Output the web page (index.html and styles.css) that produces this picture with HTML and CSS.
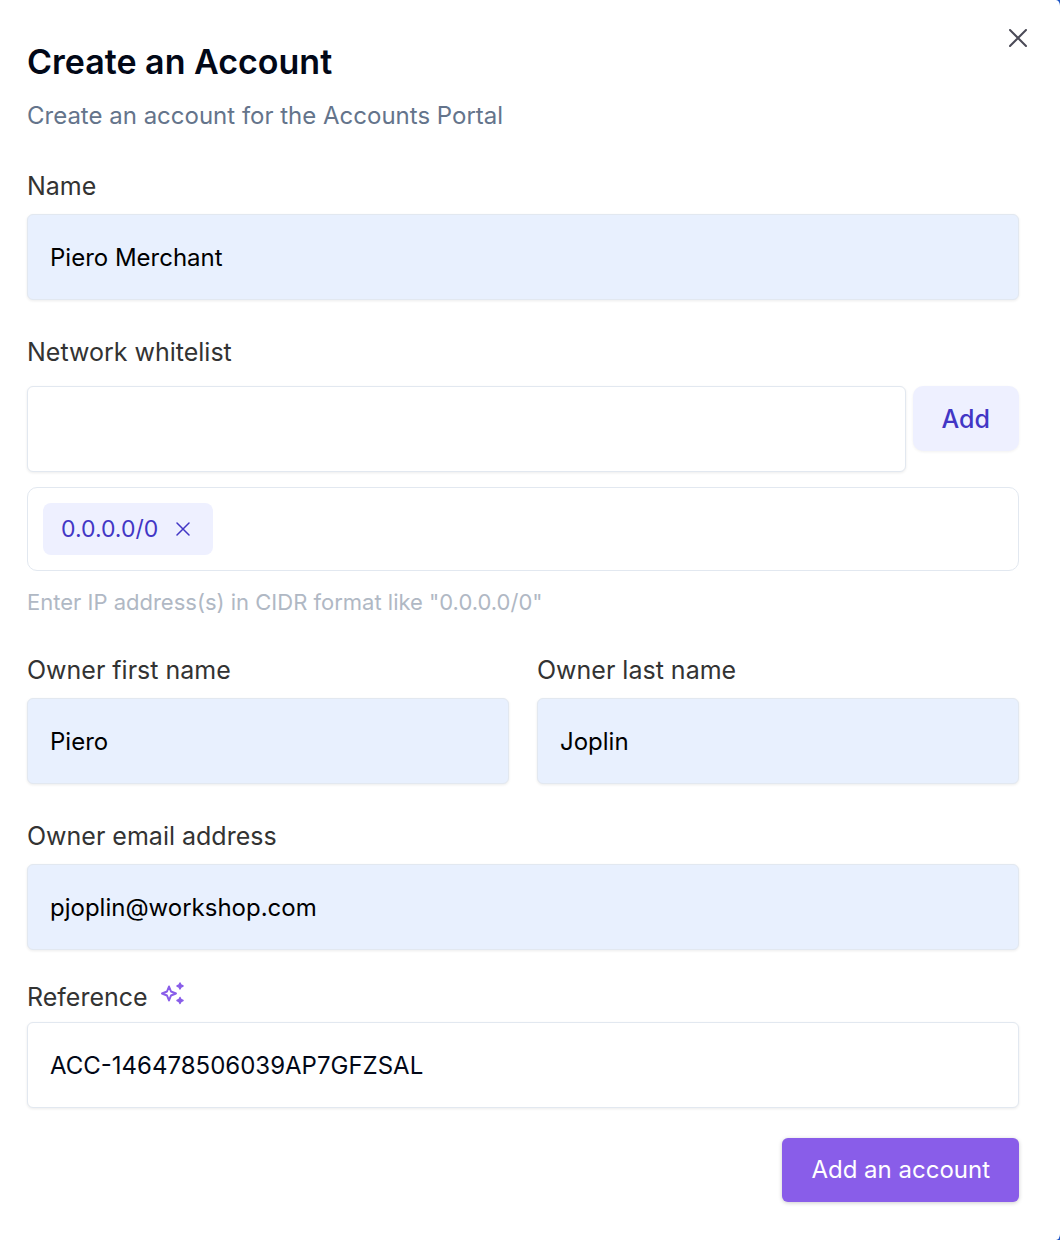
FILE: index.html
```
<!DOCTYPE html>
<html lang="en">

<head>
    <meta charset="utf-8">
    <title>Create an Account</title>
    <meta name="viewport" content="width=device-width">
    <link rel="stylesheet" href="styles.css">
</head>

<body>
    <main class="modal">
        <button type="button" class="close" aria-label="Close">
            <svg width="18" height="18" viewBox="0 0 18 18"><path d="M1 1l16 16M17 1L1 17"/></svg>
        </button>

        <header class="modal-header">
            <h1>Create an Account</h1>
            <p>Create an account for the Accounts Portal</p>
        </header>

        <form>
            <div class="field">
                <label for="name">Name</label>
                <input type="text" id="name" class="filled" value="Piero Merchant">
            </div>

            <div class="field whitelist">
                <label for="network">Network whitelist</label>
                <div class="add-row">
                    <input type="text" id="network">
                    <button type="button" class="btn-add">Add</button>
                </div>
                <div class="tags">
                    <span class="tag">0.0.0.0/0
                        <button type="button" aria-label="Remove 0.0.0.0/0">
                            <svg width="14" height="14" viewBox="0 0 14 14"><path d="M1 1l12 12M13 1L1 13"/></svg>
                        </button>
                    </span>
                </div>
                <p class="hint">Enter IP address(s) in CIDR format like "0.0.0.0/0"</p>
            </div>

            <div class="columns">
                <div class="field">
                    <label for="first-name">Owner first name</label>
                    <input type="text" id="first-name" class="filled" value="Piero">
                </div>
                <div class="field">
                    <label for="last-name">Owner last name</label>
                    <input type="text" id="last-name" class="filled" value="Joplin">
                </div>
            </div>

            <div class="field">
                <label for="email">Owner email address</label>
                <input type="email" id="email" class="filled" value="pjoplin@workshop.com">
            </div>

            <div class="field reference">
                <div class="label-row">
                    <label for="reference">Reference</label>
                    <button type="button" class="generate" aria-label="Generate reference">
                        <svg width="24" height="24" viewBox="0 0 24 24">
                            <path class="star" d="M9 5.500L11 10.500L16 12.500L11 14.500L9 19.500L7 14.500L2 12.500L7 10.500Z"/>
                            <path class="spark" d="M20 2l1 2l2 1l-2 1l-1 2l-1-2l-2-1l2-1zM20 16.500l1 2l2 1l-2 1l-1 2l-1-2l-2-1l2-1z"/>
                        </svg>
                    </button>
                </div>
                <input type="text" id="reference" value="ACC-146478506039AP7GFZSAL">
            </div>

            <div class="actions">
                <button type="submit" class="btn-submit">Add an account</button>
            </div>
        </form>
    </main>
</body>

</html>
```
FILE: styles.css
```
* {
    box-sizing: border-box;
}

body {
    margin: 0;
    background: #1d55c4;
    font-family: Inter, "Liberation Sans", sans-serif;
    font-size: 24px;
    line-height: 32px;
    color: #333;
}

.modal {
    position: relative;
    min-height: 100vh;
    padding: 40px 41px 38px 27px;
    background: #fff;
    border-radius: 0 4px 4px 0 / 0 6px 6px 0;
}

h1, p {
    margin: 0;
}

h1 {
    color: #020817;
    font-size: 34px;
    font-weight: 600;
    line-height: 44px;
}

.modal-header {
    margin-bottom: 38px;
}

.modal-header p {
    margin-top: 16px;
    color: #64748b;
}

button {
    border: 0;
    padding: 0;
    background: none;
    color: inherit;
    font: inherit;
    cursor: pointer;
}

svg {
    display: block;
    fill: none;
    stroke: currentColor;
    stroke-width: 2;
    stroke-linecap: round;
}

.close {
    position: absolute;
    top: 20px;
    right: 24px;
    padding: 9px;
    color: #4b4a57;
}

form {
    display: flex;
    flex-direction: column;
    gap: 36px;
}

label {
    display: block;
    margin-bottom: 12px;
    font-size: 25px;
}

input {
    display: block;
    width: 100%;
    height: 86px;
    padding: 0 22px;
    border: 1px solid #e2e8f0;
    border-radius: 6px;
    background: #fff;
    box-shadow: 0 1px 3px rgba(0, 0, 0, .08);
    color: #020817;
    font: inherit;
}

input.filled {
    background: #e8f0fe;
    color: #000;
}

.whitelist label {
    margin-bottom: 18px;
}

.add-row {
    display: flex;
    align-items: flex-start;
    gap: 7px;
}

.add-row input {
    flex: 1;
}

.btn-add {
    height: 65px;
    padding: 0 29px;
    border-radius: 10px;
    background: #eef0ff;
    box-shadow: 0 1px 3px rgba(0, 0, 0, .06);
    color: #4236c5;
    font-size: 25px;
    font-weight: 500;
}

.tags {
    display: flex;
    margin-top: 15px;
    padding: 15px;
    border: 1px solid #e2e8f0;
    border-radius: 10px;
}

.tag {
    display: flex;
    align-items: center;
    gap: 18px;
    height: 52px;
    padding: 0 23px 0 18px;
    border-radius: 8px;
    background: #eef0ff;
    color: #4236c5;
    font-size: 23px;
}

.tag svg {
    stroke-width: 1.5;
}

.hint {
    margin-top: 15px;
    color: #b0b8c4;
    font-size: 22px;
}

.columns {
    display: grid;
    grid-template-columns: 1fr 1fr;
    gap: 28px;
}

.label-row {
    display: flex;
    gap: 12px;
}

.reference {
    margin-top: -5px;
}

.reference label {
    margin-bottom: 9px;
}

.generate {
    align-self: flex-start;
    color: #895de9;
}

.star {
    stroke-linejoin: round;
}

.spark {
    fill: currentColor;
    stroke-width: 1.5;
    stroke-linejoin: round;
}

.actions {
    display: flex;
    justify-content: flex-end;
    margin-top: -6px;
}

.btn-submit {
    height: 64px;
    padding: 0 29px;
    border-radius: 6px;
    background: #895de9;
    box-shadow: 0 1px 4px rgba(0, 0, 0, .2);
    color: #fff;
}
```
